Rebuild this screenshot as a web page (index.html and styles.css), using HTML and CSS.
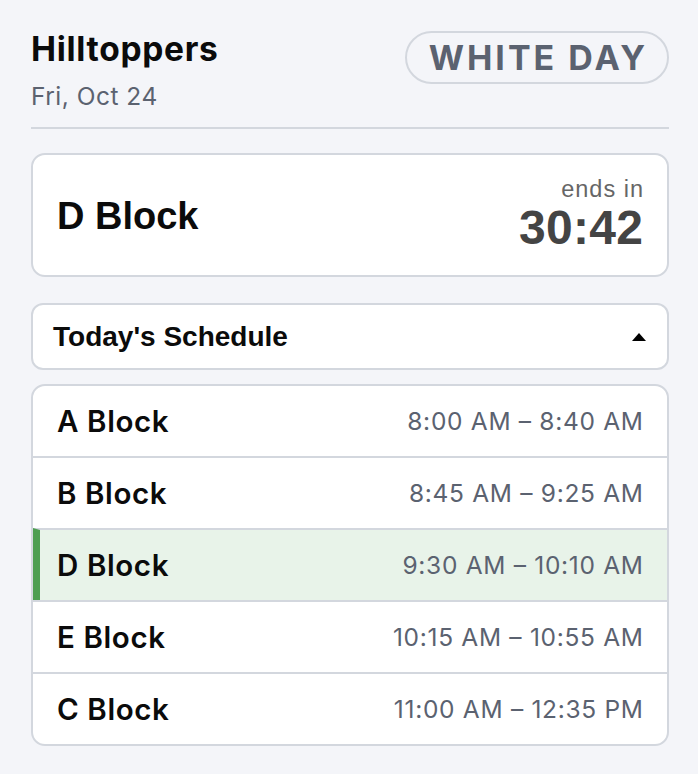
FILE: index.html
```html
<!DOCTYPE html>
<html lang="en">
<head>
<meta charset="utf-8">
<title>Hilltoppers</title>
<link rel="stylesheet" href="styles.css">
</head>
<body>
<div class="app">
  <header class="header">
    <div class="brand">
      <div class="title">Hilltoppers</div>
      <div class="date">Fri, Oct 24</div>
    </div>
    <div class="pill">WHITE DAY</div>
  </header>
  <div class="divider"></div>

  <section class="now-card">
    <div class="now-name">D Block</div>
    <div class="now-right">
      <div class="ends">ends in</div>
      <div class="countdown">30:42</div>
    </div>
  </section>

  <button class="dropdown" type="button">
    <span class="dropdown-label">Today's Schedule</span>
    <span class="caret"></span>
  </button>

  <ul class="schedule">
    <li class="row"><span class="block">A Block</span><span class="time">8:00 AM – 8:40 AM</span></li>
    <li class="row"><span class="block">B Block</span><span class="time">8:45 AM – 9:25 AM</span></li>
    <li class="row current"><span class="block">D Block</span><span class="time">9:30 AM – 10:10 AM</span></li>
    <li class="row"><span class="block">E Block</span><span class="time">10:15 AM – 10:55 AM</span></li>
    <li class="row"><span class="block">C Block</span><span class="time">11:00 AM – 12:35 PM</span></li>
  </ul>
</div>
</body>
</html>
```

FILE: styles.css
```css
* { box-sizing: border-box; }

html, body {
  margin: 0;
  padding: 0;
  background: #f4f5f9;
}

body {
  font-family: Inter, "Noto Sans", sans-serif;
  color: #111;
}

.app {
  padding: 31px 29px 0 31px;
  width: 698px;
}

.header {
  display: flex;
  justify-content: space-between;
  align-items: flex-start;
}

.title {
  font-family: Inter, sans-serif;
  font-weight: 700;
  font-size: 33.5px;
  line-height: 37px;
  letter-spacing: 0.7px;
  color: #0b0b0b;
}

.date {
  margin-top: 14px;
  font-size: 24.5px;
  line-height: 28px;
  letter-spacing: 0.5px;
  color: #5b6270;
}

.pill {
  border: 2px solid #d3d7de;
  border-radius: 30px;
  padding: 4px 19px 4px 22px;
  font-family: Inter, sans-serif;
  font-weight: 700;
  font-size: 34px;
  line-height: 41px;
  letter-spacing: 3px;
  color: #5b6270;
}

.divider {
  height: 2px;
  background: #d3d7de;
  margin-top: 17px;
}

.now-card {
  margin-top: 24px;
  height: 124px;
  background: #fff;
  border: 2px solid #d3d7de;
  border-radius: 14px;
  padding: 0 24px;
  display: flex;
  align-items: center;
  justify-content: space-between;
}

.now-name {
  font-family: "Liberation Sans", Arial, sans-serif;
  font-weight: 700;
  font-size: 38px;
  line-height: 44px;
  color: #0b0b0b;
  margin-top: 2px;
}

.now-right {
  display: flex;
  flex-direction: column;
  align-items: flex-end;
  margin-top: 2px;
}

.ends {
  font-family: "Liberation Sans", Arial, sans-serif;
  font-size: 23.5px;
  line-height: 24px;
  letter-spacing: 1px;
  margin-right: -1px;
  color: #666;
}

.countdown {
  font-family: "Liberation Sans", Arial, sans-serif;
  font-weight: 700;
  font-size: 48px;
  line-height: 54px;
  letter-spacing: 0.3px;
  margin-right: -0.3px;
  color: #444;
}

.dropdown {
  margin-top: 26px;
  width: 100%;
  height: 67px;
  background: #fff;
  border: 2px solid #d3d7de;
  border-radius: 12px;
  padding: 0 21px 0 20px;
  display: flex;
  align-items: center;
  justify-content: space-between;
  font: inherit;
  cursor: pointer;
}

.dropdown-label {
  font-family: "Liberation Sans", Arial, sans-serif;
  font-weight: 700;
  font-size: 28px;
  color: #0b0b0b;
}

.caret {
  width: 0;
  height: 0;
  border-left: 7px solid transparent;
  border-right: 7px solid transparent;
  border-bottom: 8px solid #000;
}

.schedule {
  list-style: none;
  margin: 14px 0 0;
  padding: 0;
  background: #fff;
  border: 2px solid #d3d7de;
  border-radius: 14px;
  overflow: hidden;
}

.row {
  height: 72px;
  display: flex;
  align-items: center;
  justify-content: space-between;
  padding: 0 24px;
  border-top: 2px solid #d3d7de;
}

.row:first-child {
  height: 70px;
  border-top: none;
}

.row.current {
  background: #e8f3e9;
  border-left: 7px solid #4e9f52;
  padding-left: 17px;
}

.block {
  font-family: Inter, sans-serif;
  font-weight: 600;
  font-size: 29.5px;
  letter-spacing: 0.6px;
  color: #0b0b0b;
}

.time {
  font-family: Inter, sans-serif;
  font-size: 24.5px;
  letter-spacing: 0.7px;
  margin-right: -0.7px;
  color: #5b6270;
}
```
